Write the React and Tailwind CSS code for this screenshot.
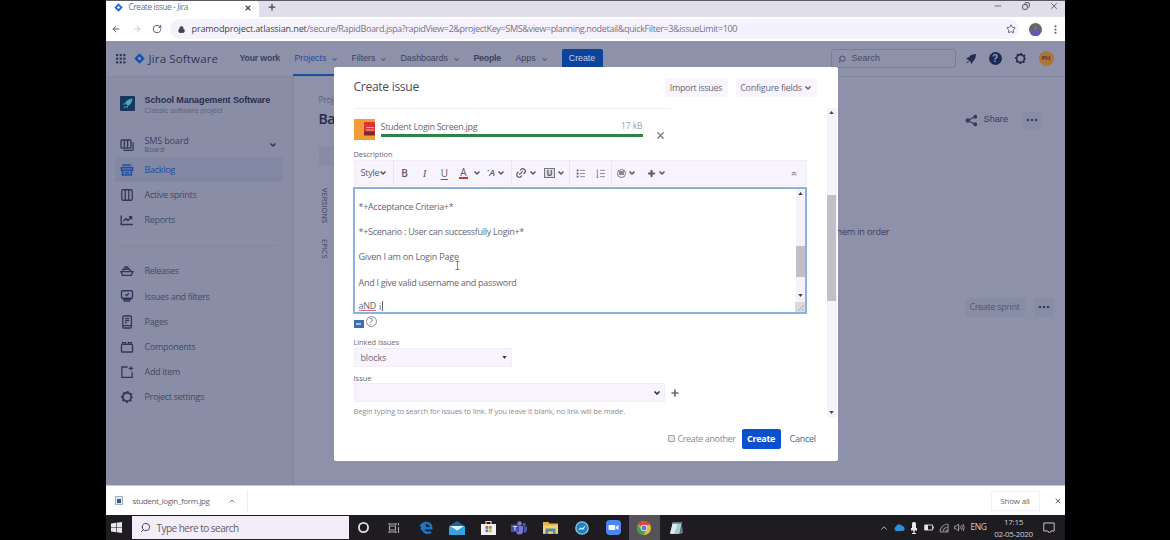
import React from "react";
import {
  ArrowLeft, ArrowRight, RotateCw, Lock, Star, X, Minus, Plus, ChevronDown, ChevronUp, Search,
  Columns3, Link2, Copy, Circle, MoreVertical,
} from "lucide-react";

const JiraMark = ({ className, color = "#1f6fe0", hole = "#fff" }) => (
  <svg viewBox="0 0 12 12" className={className}>
    <path d="M6 0.3 11.7 6 6 11.7 0.3 6Z" fill={color} />
    <path d="M6 3.9 8.1 6 6 8.1 3.9 6Z" fill={hole} />
  </svg>
);

const GearIcon = ({ className }) => (
  <svg viewBox="0 0 14 14" className={className} fill="none" stroke="currentColor">
    <circle cx="7" cy="7" r="4.2" strokeWidth="1.7" />
    <circle cx="7" cy="7" r="5.3" strokeWidth="1.4" strokeDasharray="2.08 2.08" strokeDashoffset="1.04" />
  </svg>
);

const BoardIcon = () => (
  <svg viewBox="0 0 14 14" className="size-[14px]" fill="none" stroke="currentColor" strokeWidth="1.3">
    <rect x="1" y="2" width="10" height="8.2" rx="1" />
    <path d="M4.4 2v8M7.6 2v8M3.5 12.3h8.2q1.4 0 1.4-1.4V4.5" />
  </svg>
);
const BacklogIcon = () => (
  <svg viewBox="0 0 14 14" className="size-[14px]" fill="none" stroke="currentColor" strokeWidth="1.6">
    <path d="M2.2 2h8.6M1.5 4.6h11v2.6h-11zM2.6 7.2h8.8v4.8H2.6zM4.6 9.6h4.8" />
  </svg>
);
const ReportsIcon = () => (
  <svg viewBox="0 0 14 14" className="size-[14px]" fill="none" stroke="currentColor" strokeWidth="1.4">
    <path d="M1.2 2.5v9h11.8M3.4 8.4l2.5-2.8 2 2L11.4 4M8.9 3.8h2.7v2.7" />
  </svg>
);
const ShipIcon = () => (
  <svg viewBox="0 0 14 14" className="size-[14px]" fill="none" stroke="currentColor" strokeWidth="1.4">
    <path d="M1 7.6h12l-1.8 3.8H2.6zM3 7.4V5.2h6.4l1.6 2.2M5 5V3h2.6l.8 2" />
  </svg>
);
const IssuesIcon = () => (
  <svg viewBox="0 0 14 14" className="size-[14px]" fill="none" stroke="currentColor" strokeWidth="1.4">
    <rect x="1.5" y="1.8" width="11" height="7.4" rx="1.2" />
    <path d="M5.3 5.4l1.3 1.2 2.3-2.4M2.6 10.4h8.8M3.6 12h6.8" />
  </svg>
);
const PagesIcon = () => (
  <svg viewBox="0 0 14 14" className="size-[14px]" fill="none" stroke="currentColor" strokeWidth="1.3">
    <rect x="2.8" y="1" width="8.6" height="12" rx="1.2" />
    <path d="M5 3.6h4.2M5 5.6h4.2M5 7.6h2M2.8 10.6h8.6" />
  </svg>
);
const ComponentsIcon = () => (
  <svg viewBox="0 0 14 14" className="size-[14px]" fill="none" stroke="currentColor" strokeWidth="1.4">
    <rect x="1.5" y="4.4" width="11" height="7.6" rx="0.8" />
    <path d="M2.6 4.2V2.6h3v1.6M8.4 4.2V2.6h3v1.6" />
  </svg>
);
const AddItemIcon = () => (
  <svg viewBox="0 0 14 14" className="size-[14px]" fill="none" stroke="currentColor" strokeWidth="1.3">
    <path d="M7.6 2H1.9v10.4h10.3V7.2M11 1.2v4.4M8.8 3.4h4.4" />
  </svg>
);
const ShareIcon = () => (
  <svg viewBox="0 0 14 14" className="size-[13px]" fill="currentColor" stroke="currentColor" strokeWidth="1.4">
    <path d="M3 7 10.6 3M3 7l7.6 4" />
    <circle cx="3" cy="7" r="1.7" /><circle cx="11" cy="2.9" r="1.4" /><circle cx="11" cy="11.1" r="1.4" />
  </svg>
);
const Dots = () => (
  <svg viewBox="0 0 12 4" className="h-[4px] w-[12px]" fill="currentColor">
    <circle cx="2" cy="2" r="1.3" /><circle cx="6" cy="2" r="1.3" /><circle cx="10" cy="2" r="1.3" />
  </svg>
);
const Caret = ({ up }) => (
  <svg viewBox="0 0 6 4" className="h-[3px] w-[5px]" fill="#44404c">
    <path d={up ? "M0 4h6L3 0z" : "M0 0h6L3 4z"} />
  </svg>
);
const Chev = () => <ChevronDown className="size-[8px] shrink-0" strokeWidth={5} />;

function Browser() {
  return (
    <>
      <div className="flex h-[17px] shrink-0 border-t border-[#5b5963] bg-[#e0deeb]">
        <div className="flex w-[153px] items-center rounded-tr-[3px] bg-white pb-[3px] pl-[8px]">
          <JiraMark className="size-[9px]" />
          <span className="ml-[6px] w-[111px] whitespace-nowrap text-[8.3px] tracking-[-0.38px] text-[#6f6d78]">Create issue - Jira</span>
          <X className="ml-[4px] size-[8px] text-[#444]" strokeWidth={3.5} />
        </div>
        <Plus className="ml-[8px] mt-[1px] size-[10px] text-[#444]" strokeWidth={3} />
        <div className="ml-auto flex gap-[19px] pr-[6px] text-[#55535e]">
          <Minus className="size-[10px]" />
          <Copy className="mt-[1px] size-[8px] -scale-x-100" strokeWidth={3} />
          <X className="size-[10px]" />
        </div>
      </div>
      <div className="flex h-[24px] shrink-0 items-center bg-white text-[#5f5d68]">
        <ArrowLeft className="ml-[5px] size-[10px]" strokeWidth={2.4} />
        <ArrowRight className="ml-[11px] size-[10px] text-[#c3c1ca]" />
        <RotateCw className="ml-[10px] size-[10px]" strokeWidth={2.4} />
        <div className="ml-[8px] flex h-[20px] w-[849px] items-center rounded-full bg-[#f6f2fd] pl-[8px]">
          <Lock className="size-[7px] fill-[#44424d] text-[#44424d]" strokeWidth={3} />
          <span className="ml-[7px] whitespace-nowrap text-[9.1px] tracking-[-0.4px] text-[#77747f]">
            <span className="tracking-[-0.16px] text-[#45434e]">pramodproject.atlassian.net</span>/secure/RapidBoard.jspa?rapidView=2&amp;projectKey=SMS&amp;view=planning.nodetail&amp;quickFilter=3&amp;issueLimit=100
          </span>
          <Star className="ml-auto mr-[3px] size-[10px]" strokeWidth={2.2} />
        </div>
        <svg viewBox="0 0 14 14" className="ml-[10px] size-[13px]">
          <circle cx="7" cy="7" r="7" fill="#596b68" />
          <path d="M2 12q0-5 5-5t5 5a7 7 0 0 1-10 0" fill="#6a52b8" />
          <circle cx="7" cy="5" r="2.2" fill="#8a6a62" />
        </svg>
        <MoreVertical className="ml-[8px] size-[11px]" strokeWidth={2.6} />
      </div>
    </>
  );
}

function NavItem({ label, className, chevron = true, active }) {
  return (
    <div className={`relative flex h-full items-center whitespace-nowrap pt-[1px] text-[8.8px] ${active ? "text-[#1d4a9e]" : "text-[#3c4260]"} ${className}`}>
      {label}
      {chevron && <ChevronDown className="ml-[5px] size-[7px] opacity-70" strokeWidth={3.500} />}
      {active && <div className="absolute -left-[2px] bottom-0 h-[2px] w-[48px] bg-[#1a4fa8]" />}
    </div>
  );
}

function TopNav() {
  return (
    <div className="flex h-[36px] shrink-0 items-center border-b border-[#8389a1] font-['Liberation_Sans',sans-serif] text-[#2f3656]">
      <svg viewBox="0 0 11 11" className="ml-[10px] size-[10px]" fill="currentColor">
        {[0, 4, 8].map((y) => [0, 4, 8].map((x) => <rect key={x + "-" + y} x={x} y={y} width="2.4" height="2.4" />))}
      </svg>
      <JiraMark className="ml-[8px] size-[11px]" color="#1650b0" hole="#8d92aa" />
      <span className="ml-[4px] w-[91px] whitespace-nowrap font-['Open_Sans',sans-serif] text-[11.5px] font-medium tracking-[0.15px]">Jira Software</span>
      <NavItem label="Your work" chevron={false} className="w-[55px] font-bold tracking-[-0.2px]" />
      <NavItem label="Projects" active className="w-[57px]" />
      <NavItem label="Filters" className="w-[49px]" />
      <NavItem label="Dashboards" className="w-[73px]" />
      <NavItem label="People" chevron={false} className="w-[42px] font-bold tracking-[-0.25px]" />
      <NavItem label="Apps" className="w-[46px]" />
      <div className="flex h-[20px] w-[41px] items-center justify-center rounded-[2px] bg-[#0c439c] text-[8.8px] text-[#c3cce4]">Create</div>
      <div className="ml-auto flex h-[19px] w-[125px] items-center gap-[6px] rounded-[3px] border border-[#777d97] pl-[6px] text-[9px] text-[#454b68]">
        <Search className="size-[8px] -scale-x-100" strokeWidth={3} />
        Search
      </div>
      <svg viewBox="0 0 12 12" className="ml-[9px] size-[12px]" fill="#252c50">
        <path d="M11 1Q6 1 4 4L1 5.5l2 1.2L5.600 9l1 2.200L8 8.300Q11 6 11 1Z" /><path d="M3 8 1.500 10.500 4 9Z" />
      </svg>
      <div className="ml-[12px] flex size-[13px] items-center justify-center rounded-full bg-[#1f2a54] text-[10px] font-bold text-[#959bb3]">?</div>
      <GearIcon className="ml-[12px] size-[13px] text-[#252c50]" />
      <div className="ml-[12px] mr-[11px] flex size-[15px] items-center justify-center rounded-full bg-[#b07335] text-[6px] font-bold text-[#4a3434]">PH</div>
    </div>
  );
}

function SideItem({ icon, label, active }) {
  return (
    <div className={`mx-[9px] flex h-[25.2px] items-center rounded-[2px] pl-[5px] ${active ? "bg-[#8288a3] text-[#1f4fa3]" : "text-[#31375a]"}`}>
      {icon}
      <span className={`ml-[11px] whitespace-nowrap text-[9px] tracking-[-0.3px] ${active ? "" : "text-[#434965]"}`}>{label}</span>
    </div>
  );
}

function Sidebar() {
  return (
    <div className="flex w-[188px] shrink-0 flex-col border-r-2 border-[#848aa2] bg-[#898ea6]">
      <div className="mt-[17px] flex h-[22px] items-center pl-[14px] font-['Liberation_Sans',sans-serif]">
        <svg viewBox="0 0 15 15" className="-mt-[3px] size-[15px]">
          <rect width="15" height="15" rx="1" fill="#16365f" />
          <path d="M12.500 2.500Q7 3 5 7l3 3q4-2 4.500-7.500M5 7 2.500 8l2 1M8 10l-.5 2.500-1.500-2M3 12.500l2-2.500 1 1z" fill="#4fa7b5" />
        </svg>
        <div className="ml-[10px] whitespace-nowrap leading-none">
          <div className="text-[9px] font-bold tracking-[-0.09px] text-[#282e50]">School Management Software</div>
          <div className="mt-[2px] text-[7.400px] text-[#5f6581]">Classic software project</div>
        </div>
      </div>
      <div className="mt-[16px] flex h-[25px] items-center pl-[14px] text-[#31375a]">
        <BoardIcon />
        <div className="ml-[11px] w-[124px] leading-none text-[#3b4160]">
          <div className="text-[9px] tracking-[-0.15px]">SMS board</div>
          <div className="mt-[1px] text-[7px] text-[#50566f]">Board</div>
        </div>
        <Chev />
      </div>
      <SideItem icon={<BacklogIcon />} label="Backlog" active />
      <SideItem icon={<Columns3 className="size-[14px]" strokeWidth={2.2} />} label="Active sprints" />
      <SideItem icon={<ReportsIcon />} label="Reports" />
      <div className="mx-[14px] mb-[13px] mt-[12px] h-px bg-[#8087a0]" />
      <SideItem icon={<ShipIcon />} label="Releases" />
      <SideItem icon={<IssuesIcon />} label="Issues and filters" />
      <SideItem icon={<PagesIcon />} label="Pages" />
      <SideItem icon={<ComponentsIcon />} label="Components" />
      <SideItem icon={<AddItemIcon />} label="Add item" />
      <SideItem icon={<GearIcon className="size-[14px]" />} label="Project settings" />
    </div>
  );
}

function BoardPage() {
  return (
    <div className="flex flex-1 justify-between text-[#363c5c]">
      <div className="flex w-[40px] flex-col overflow-hidden pl-[25px]">
        <div className="mt-[17px] text-[8.5px] leading-[12px] tracking-[-0.2px] text-[#5a607c]">Projects</div>
        <div className="mt-[4px] text-[14px] font-semibold leading-[18px] tracking-[-0.4px] text-[#262c4e]">Backlog</div>
        <div className="mt-[18px] h-[20px] w-[60px] shrink-0 rounded-[2px] bg-[#878ca5]" />
        <div className="-ml-[1px] mt-[22px] flex w-[12px] gap-[16px] text-[7.500px] [writing-mode:vertical-rl]">
          <span>VERSIONS</span>
          <span>EPICS</span>
        </div>
      </div>
      <div className="flex w-[235px] flex-col text-[9.200px]">
        <div className="mt-[33px] flex h-[20px] items-center pl-[135px]">
          <ShareIcon />
          <span className="ml-[6px] w-[38px] font-['Liberation_Sans',sans-serif]">Share</span>
          <div className="flex h-[17px] w-[20px] items-center justify-center rounded-[2px] bg-[#888da6]"><Dots /></div>
        </div>
        <div className="mt-[94px] h-[16px] whitespace-nowrap pl-[4px] leading-[16px] tracking-[-0.25px]">them in order</div>
        <div className="mt-[57px] flex h-[20px] items-center pl-[135px]">
          <div className="flex h-[19px] w-[60px] items-center justify-center whitespace-nowrap rounded-[2px] bg-[#888da6] tracking-[-0.42px] text-[#50556f]">Create sprint</div>
          <div className="ml-[9px] flex h-[19px] w-[20px] items-center justify-center rounded-[2px] bg-[#888da6]"><Dots /></div>
        </div>
      </div>
    </div>
  );
}

const Tool = ({ className, children }) => (
  <div className={`flex h-full shrink-0 items-center justify-center gap-[2px] ${className}`}>{children}</div>
);
const Sep = () => <div className="h-full w-px shrink-0 bg-[#e9e4f0]" />;

function ListIcon({ numbered }) {
  return (
    <svg viewBox="0 0 10 10" className="size-[9px]" stroke="currentColor" strokeWidth="1" fill="none">
      <path d="M4.500 1.500H10M4.500 5H10M4.500 8.500H10" opacity="0.75" />
      {numbered ? <path d="M1.500 0.500v9M.5 9.500h2" opacity="0.8" /> : <path d="M.8 1.500h1.900M.8 5h1.900M.8 8.500h1.900" strokeWidth="2" />}
    </svg>
  );
}

function EditorToolbar() {
  return (
    <div className="flex h-[26px] w-[453px] items-center border border-[#f1ecf7] bg-[#f8f4fd] text-[#5d5a68]">
      <Tool className="w-[38px] pl-[1px] text-[9px]"><span className="tracking-[-0.2px]">Style</span><span className="-ml-[2px]"><Chev /></span></Tool>
      <Sep />
      <Tool className="ml-px w-[20px] text-[10px] font-semibold">B</Tool>
      <Tool className="w-[20px] font-['Liberation_Serif',serif] text-[11px] italic">I</Tool>
      <Tool className="w-[20px] text-[10px] underline underline-offset-2">U</Tool>
      <Tool className="w-[18px]"><span className="border-b-2 border-[#c8364a] px-[1px] text-[10px] leading-[9px]">A</span></Tool>
      <Tool className="w-[9px]"><Chev /></Tool>
      <Tool className="w-[29px] text-[9.500px] font-semibold italic"><span><sup className="text-[6px]">•</sup>A</span><Chev /></Tool>
      <Sep />
      <Tool className="w-[29px]"><Link2 className="size-[12px] -rotate-45" strokeWidth={2.4} /><Chev /></Tool>
      <Tool className="w-[28px]"><span className="flex h-[10px] w-[11px] items-center justify-center border border-[#77747f] bg-[#e2dfe9] text-[8px] font-bold leading-none">U</span><Chev /></Tool>
      <Sep />
      <Tool className="w-[21px]"><ListIcon /></Tool>
      <Tool className="w-[20px]"><ListIcon numbered /></Tool>
      <Sep />
      <Tool className="w-[30px]"><span className="flex size-[9px] items-center justify-center rounded-full border border-[#77747f]"><span className="h-[4px] w-[5px] bg-[#8b8893]" /></span><Chev /></Tool>
      <Tool className="w-[29px]"><Plus className="size-[9px]" strokeWidth={5.500} /><Chev /></Tool>
      <Tool className="ml-auto w-[24px]">
        <svg viewBox="0 0 8 6" className="h-[5px] w-[6px]" fill="none" stroke="#77747f" strokeWidth="1.2"><path d="M1 3l3-2 3 2M1 5.500l3-2 3 2" /></svg>
      </Tool>
    </div>
  );
}

function Editor() {
  return (
    <div className="relative flex h-[127px] w-[454px] border-2 border-[#8bb1e0] bg-white">
      <div className="flex-1 overflow-hidden pl-[4px] pt-[5px] text-[9px] leading-[25.2px] tracking-[-0.28px] text-[#686571]">
        <p>*+Acceptance Criteria+*</p>
        <p>*+Scenario : User can successfully Login+*</p>
        <p className="tracking-[-0.22px]">Given I am on Login Page</p>
        <p>And I give valid username and password</p>
        <div className="mt-[6px] flex h-[11px] items-center leading-[11px]">
          <span className="border-b border-[#cf6f88] leading-[9px]">aND</span>
          <span className="ml-[3px]">i</span>
          <span className="ml-[1px] h-[10px] w-px bg-[#66636e]" />
        </div>
      </div>
      <div className="flex w-[9px] flex-col items-center bg-[#f6f2fa]">
        <div className="mt-[3px]"><Caret up /></div>
        <div className="mt-[51px] h-[31px] w-full bg-[#c3bec7]" />
        <div className="mt-[17px]"><Caret /></div>
        <svg viewBox="0 0 10 10" className="mt-auto size-[10px] bg-[#dcd9e0]" stroke="#a4a1ab" strokeWidth="0.8"><path d="M9 3 3 9M9 6.500 6.500 9" /></svg>
      </div>
      <svg viewBox="0 0 5 9" className="absolute left-[100px] top-[72px] h-[9px] w-[5px]" fill="none" stroke="#66636e" strokeWidth="0.8"><path d="M.5.5h4M2.500.5v8M.5 8.500h4" /></svg>
    </div>
  );
}

function Modal() {
  return (
    <div className="absolute left-[228px] top-[26px] flex h-[394px] w-[504px] flex-col rounded-[2px] bg-white text-[#6b6874]">
      <div className="flex h-[41px] shrink-0 items-center pl-[20px]">
        <span className="text-[12.200px] tracking-[-0.35px] text-[#4f4c5a]">Create issue</span>
        <div className="ml-auto flex h-[19px] w-[63px] items-center justify-center whitespace-nowrap rounded-[2px] bg-[#f8f4fd] text-[9px] tracking-[-0.32px]">Import issues</div>
        <div className="ml-[8px] mr-[21px] flex h-[19px] w-[81px] items-center justify-center gap-[2px] whitespace-nowrap rounded-[2px] bg-[#f8f4fd] text-[9px] tracking-[-0.26px]">Configure fields<Chev /></div>
      </div>
      <div className="flex h-[309px] shrink-0">
        <div className="flex w-[493px] flex-col pl-[20px]">
          <div className="h-px w-[317px] bg-[#f1eef4]" />
          <div className="mt-[10px] flex h-[21px]">
            <svg viewBox="0 0 21 21" className="size-[21px] shrink-0">
              <rect width="21" height="21" fill="#f49b38" />
              <rect x="10" y="3" width="11" height="10" fill="#d9363a" />
              <rect x="10" y="12.500" width="11" height="4" fill="#7e2a2c" />
              <path d="M12 8.500h8M12 11h8" stroke="#f2a29c" strokeWidth="1" />
            </svg>
            <div className="ml-[5px] flex w-[263px] flex-col pl-[1px]">
              <div className="flex h-[15px] items-center justify-between pb-[1px] text-[9px] leading-none">
                <span className="tracking-[-0.3px]">Student Login Screen.jpg</span>
                <span className="text-[8.500px] tracking-[-0.1px] text-[#a29fa9]">17 kB</span>
              </div>
              <div className="h-[3px] bg-[#2c8447]" />
            </div>
            <X className="ml-[12px] mt-[11px] size-[11px] text-[#77747f]" strokeWidth={2.6} />
          </div>
          <div className="mt-[9px] h-[11px] text-[7.500px] leading-[11px] tracking-[-0.1px]">Description</div>
          <EditorToolbar />
          <div className="-ml-px mt-px"><Editor /></div>
          <div className="mt-[2px] flex h-[12px] items-end gap-[2px]">
            <div className="flex h-[8px] w-[10px] items-center justify-center bg-[#3b6fae]"><div className="h-[2px] w-[5px] bg-[#a9c3e2]" /></div>
            <div className="mb-[1px] flex size-[11px] items-center justify-center rounded-full border border-[#8b8893] text-[9px] leading-none">?</div>
          </div>
          <div className="mt-[9px] h-[11px] text-[7.500px] font-medium leading-[11px] tracking-[-0.1px]">Linked Issues</div>
          <div className="flex h-[19px] w-[158px] items-center justify-between border border-[#f1ecf7] bg-[#f8f4fd] pl-[6px] pr-[4px] text-[9px] tracking-[-0.15px]">blocks<Caret /></div>
          <div className="mt-[6px] h-[10px] text-[7.500px] font-medium leading-[10px]">Issue</div>
          <div className="flex items-center">
            <div className="flex h-[19px] w-[311px] items-center justify-end border border-[#f1ecf7] bg-[#f8f4fd] pr-[3px] text-[#2d2a38]"><Chev /></div>
            <Plus className="ml-[5px] mt-[1px] size-[10px]" strokeWidth={4} />
          </div>
          <div className="mt-[4px] whitespace-nowrap text-[7.600px] leading-[11px] tracking-[-0.17px] text-[#8f8c98]">Begin typing to search for issues to link. If you leave it blank, no link will be made.</div>
        </div>
        <div className="flex flex-1 flex-col items-center border-r border-white bg-[#f6f2fa]">
          <div className="mt-[3px]"><Caret up /></div>
          <div className="mt-[81px] h-[106px] w-[9px] bg-[#c3bec7]" />
          <div className="mb-[3px] mt-auto"><Caret /></div>
        </div>
      </div>
      <div className="flex flex-1 items-center justify-end text-[9px]">
        <div className="-mt-[2px] size-[7px] rounded-[1px] border border-[#a4a1ab] bg-[#e8e5ec]" />
        <span className="ml-[3px] w-[64px] whitespace-nowrap tracking-[-0.38px] text-[#8b8894]">Create another</span>
        <div className="flex h-[20px] w-[39px] items-center justify-center rounded-[2px] bg-[#0b50cc] font-bold tracking-[-0.3px] text-white">Create</div>
        <span className="ml-[9px] w-[48px] tracking-[-0.25px] text-[#3f6299]">Cancel</span>
      </div>
    </div>
  );
}

function DownloadBar() {
  return (
    <div className="flex h-[30px] shrink-0 items-center border-t border-[#c9c7d4] bg-white text-[#66636e]">
      <svg viewBox="0 0 8 9" className="ml-[9px] h-[9px] w-[8px]"><rect x=".5" y=".5" width="7" height="8" fill="#e3e8f0" stroke="#a9b3c4" /><rect x="2" y="3" width="4" height="4" fill="#2d5f9a" /></svg>
      <span className="ml-[10px] w-[95px] text-[8px] tracking-[-0.38px]">student_login_form.jpg</span>
      <ChevronUp className="size-[8px]" strokeWidth={2.6} />
      <div className="ml-[11px] h-[22px] w-px bg-[#ebe8f0]" />
      <div className="ml-auto mr-[14px] flex h-[20px] w-[49px] items-center justify-center border border-[#f2eff7] text-[8px] tracking-[-0.2px]">Show all</div>
      <X className="mr-[3px] size-[8px]" strokeWidth={3} />
    </div>
  );
}

const AppSlot = ({ children, active }) => (
  <div className={`flex h-full w-[31.25px] items-center justify-center ${active ? "bg-[#55525a]" : ""}`}>{children}</div>
);

function Taskbar() {
  return (
    <div className="flex h-[25px] shrink-0 items-center bg-[#1e1c20] text-[#cfccd4]">
      <div className="flex w-[26px] justify-center pr-[4px]">
        <svg viewBox="0 0 11 11" className="size-[11px]" fill="#e8e6ec"><path d="M0 1.500 5 .8v4.400H0zM5.600.7 11 0v5.200H5.600zM0 5.800h5v4.400l-5-.7zM5.600 5.800H11V11l-5.400-.7z" /></svg>
      </div>
      <div className="flex h-[23px] w-[217px] items-center bg-[#f3edf7] pl-[8px] text-[#5f5c68]">
        <Search className="size-[11px] -scale-x-100 text-[#44424d]" />
        <span className="ml-[6px] pt-[1px] text-[10px] tracking-[-0.52px]">Type here to search</span>
      </div>
      <div className="-ml-px flex h-full">
        <AppSlot><Circle className="size-[11px] text-[#e1dfe6]" strokeWidth={4} /></AppSlot>
        <AppSlot>
          <svg viewBox="0 0 12 10" className="h-[10px] w-[12px]" fill="none" stroke="#a9a7af" strokeWidth="1.100"><path d="M1 1h7M1 9h7M1.500 3h6v4h-6zM10.500 0v2.500M10.500 4v6M1 0v2M8 0v2M1 8v2M8 8v2" /></svg>
        </AppSlot>
        <AppSlot>
          <svg viewBox="0 0 13 13" className="size-[14px]" fill="none" stroke="#1976c9" strokeWidth="2.300"><path d="M3.200 6.800h8.300Q11.300 1.800 6.800 1.800 3 1.800 1.600 5.300M4 6.800Q4 11 8 11q1.800 0 3.200-.8M2.500 8.500Q2.600 4.800 6.500 4.500" /></svg>
        </AppSlot>
        <AppSlot>
          <svg viewBox="0 0 16 14" className="h-[14px] w-[16px]"><path d="M0 5 8 0l8 5v9H0z" fill="#1467a8" /><path d="M0 5.500h16V14H0z" fill="#36a3e0" /><path d="M1 5h14L8 9.500z" fill="#e9f2f8" /></svg>
        </AppSlot>
        <AppSlot>
          <svg viewBox="0 0 15 15" className="size-[15px]"><path d="M5 4V1.500h5V4" fill="none" stroke="#dedce2" strokeWidth="1.100" /><path d="M0 4h15v11H0z" fill="#f1eff4" /><path d="M4.500 6h2.800v2.800H4.500z" fill="#d9563a" /><path d="M7.900 6h2.800v2.800H7.900z" fill="#7ba83a" /><path d="M4.500 9.400h2.800v2.800H4.500z" fill="#3a8fd0" /><path d="M7.900 9.400h2.800v2.800H7.900z" fill="#e2b036" /></svg>
        </AppSlot>
        <AppSlot>
          <svg viewBox="0 0 16 14" className="h-[14px] w-[16px]"><circle cx="8.500" cy="2.500" r="2.300" fill="#7b7fd0" /><circle cx="13.200" cy="3.600" r="1.500" fill="#5b5fb8" /><path d="M5 5h7v5q0 3.500-3.500 3.500T5 10z" fill="#7478cc" /><path d="M12.400 5.600H16v4q-.5 2.600-3 2.400z" fill="#4f53a6" /><rect y="3.500" width="8" height="7.500" fill="#4a4ea8" /><path d="M2 5.500h4M4 5.500V9.500" stroke="#dcdcf2" /></svg>
        </AppSlot>
        <AppSlot>
          <svg viewBox="0 0 15 13" className="h-[13px] w-[15px]"><path d="M0 1h5.500l1 1.500H15V13H0z" fill="#e5b347" /><path d="M0 4.500h15V12H0z" fill="#f4d272" /><path d="M2.500 7.500h10V13h-2.500v-2.500H5V13H2.500z" fill="#4c8db8" /></svg>
        </AppSlot>
        <AppSlot>
          <svg viewBox="0 0 14 14" className="size-[14px]"><circle cx="7" cy="7" r="6.200" fill="#1d84c4" stroke="#8fc4e4" strokeWidth="1.300" /><path d="M3 9 5.500 6.500 7 7.500 11 4 8 9 6.500 8z" fill="#eef6fb" /></svg>
        </AppSlot>
        <AppSlot>
          <svg viewBox="0 0 15 15" className="size-[15px]"><rect width="15" height="15" rx="4" fill="#4b86ee" /><rect x="2.500" y="5" width="6.800" height="5" rx="1" fill="#f3f6fd" /><path d="M9.800 6.800 12.500 5v5L9.800 8.200z" fill="#f3f6fd" /></svg>
        </AppSlot>
        <AppSlot active>
          <svg viewBox="0 0 14 14" className="size-[14px]"><circle cx="7" cy="7" r="7" fill="#e8b93a" /><path d="M7 7 .9 3.600A7 7 0 0 1 13.300 4H7z" fill="#d94a3d" /><path d="M.9 3.600A7 7 0 0 0 6.500 14L9.600 8.500 7 7 4 8.500z" fill="#3c9e58" /><circle cx="7" cy="7" r="3.200" fill="#eef1f6" /><circle cx="7" cy="7" r="2.500" fill="#4a86d8" /></svg>
        </AppSlot>
        <AppSlot>
          <svg viewBox="0 0 14 14" className="size-[14px]"><path d="M4 1h9L10.500 13H1z" fill="#a9c9cf" /><path d="M4 1h5L5.500 12.500H1z" fill="#dfecee" /><path d="M4 1h9l-.4 1.800h-9z" fill="#577c88" /><path d="M10.500 13 13 4l.8 8z" fill="#6e858c" /></svg>
        </AppSlot>
      </div>
      <div className="ml-auto flex h-full items-center">
        <div className="flex w-[15px] justify-center"><ChevronUp className="size-[10px]" /></div>
        <div className="flex w-[15px] justify-center"><svg viewBox="0 0 11 7" className="h-[7px] w-[11px]" fill="#2b8fe0"><path d="M2.500 7A2.400 2.400 0 0 1 2 2.400 3.600 3.600 0 0 1 8.400 2 2.600 2.600 0 0 1 9 7z" /></svg></div>
        <div className="flex w-[15px] justify-center"><svg viewBox="0 0 8 12" className="h-[12px] w-[8px]" fill="#e9e7ee"><rect x="2" width="4" height="7.500" rx="1.500" /><path d="M1 6h6v2.500H4.600V11H6v1H2v-1h1.400V8.500H1z" /></svg></div>
        <div className="flex w-[15px] justify-center"><svg viewBox="0 0 10 7" className="h-[7px] w-[10px]"><path d="M.6 1h8v5h-8zM9.500 2.500v2" fill="none" stroke="#cfccd4" /><rect x="1" y="1" width="3" height="5" fill="#e9e7ee" /></svg></div>
        <div className="flex w-[15px] justify-center"><svg viewBox="0 0 10 10" className="size-[10px]" fill="none" stroke="#85828b" strokeWidth="1.200"><path d="M1 9A8 8 0 0 1 9 1M4 9a5 5 0 0 1 5-5M6.800 9A2.200 2.200 0 0 1 9 6.800M9 1v8H1" /></svg></div>
        <div className="flex w-[15px] justify-center"><svg viewBox="0 0 12 10" className="h-[9px] w-[11px]" fill="none" stroke="#b5b2bb" strokeWidth="0.900"><path d="M.5 3.500h2L5 1v8L2.500 6.500h-2zM6.500 3.500q1 1.500 0 3M8.300 2.200q1.800 2.800 0 5.600M10 1q2.500 4 0 8" /></svg></div>
        <div className="w-[24px] text-center text-[8.500px] tracking-[-0.4px]">ENG</div>
        <div className="flex w-[46px] flex-col items-center whitespace-nowrap text-[8px] leading-[12px] tracking-[-0.3px]"><span>17:15</span><span>02-05-2020</span></div>
        <svg viewBox="0 0 12 12" className="ml-[6px] mr-[10px] size-[12px]" fill="none" stroke="#c5c2ca"><path d="M.8 1h10.400v8H8l-1.500 2L5 9H.8z" /></svg>
      </div>
    </div>
  );
}

export default function App() {
  return (
    <div className="flex h-[540px] w-[1170px] justify-center overflow-hidden bg-black font-['Open_Sans','Noto_Sans',sans-serif]">
      <div className="flex h-full w-[959px] flex-col">
        <Browser />
        <div className="relative flex h-[444px] shrink-0 flex-col overflow-hidden bg-[#8d92aa]">
          <TopNav />
          <div className="flex flex-1">
            <Sidebar />
            <BoardPage />
          </div>
          <Modal />
        </div>
        <DownloadBar />
        <Taskbar />
      </div>
    </div>
  );
}
